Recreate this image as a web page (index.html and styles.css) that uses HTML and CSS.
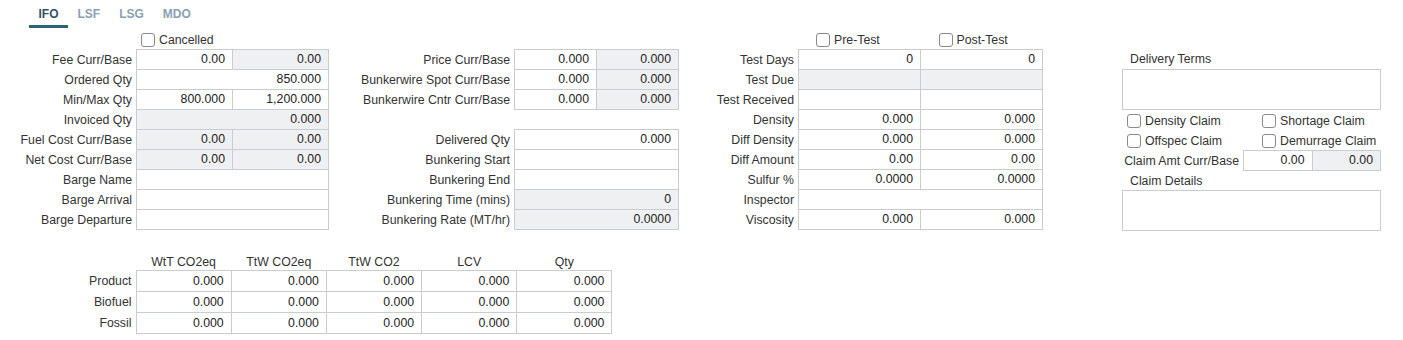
FILE: index.html
```html
<!DOCTYPE html>
<html>
<head>
  <title>Fuel Details</title>
  <link rel="stylesheet" href="styles.css">
</head>
<body>
  <nav class="tabs">
    <a class="tab active" href="#">IFO</a>
    <a class="tab" href="#">LSF</a>
    <a class="tab" href="#">LSG</a>
    <a class="tab" href="#">MDO</a>
  </nav>
  <form class="fuel-form">
    <div class="col col-qty">
      <div class="check-row pad-5"><label class="check"><input type="checkbox">Cancelled</label></div>
      <label class="lbl">Fee Curr/Base</label>
      <div class="pair"><input class="field" value="0.00"><input class="field ro" value="0.00" readonly></div>
      <label class="lbl">Ordered Qty</label>
      <input class="field" value="850.000">
      <label class="lbl">Min/Max Qty</label>
      <div class="pair"><input class="field" value="800.000"><input class="field" value="1,200.000"></div>
      <label class="lbl">Invoiced Qty</label>
      <input class="field ro" value="0.000" readonly>
      <label class="lbl">Fuel Cost Curr/Base</label>
      <div class="pair"><input class="field ro" value="0.00" readonly><input class="field ro" value="0.00" readonly></div>
      <label class="lbl">Net Cost Curr/Base</label>
      <div class="pair"><input class="field ro" value="0.00" readonly><input class="field ro" value="0.00" readonly></div>
      <label class="lbl">Barge Name</label>
      <input class="field">
      <label class="lbl">Barge Arrival</label>
      <input class="field">
      <label class="lbl">Barge Departure</label>
      <input class="field">
    </div>

    <div class="col col-price">
      <div class="check-row"></div>
      <label class="lbl">Price Curr/Base</label>
      <div class="pair"><input class="field" value="0.000"><input class="field ro" value="0.000" readonly></div>
      <label class="lbl">Bunkerwire Spot Curr/Base</label>
      <div class="pair"><input class="field" value="0.000"><input class="field ro" value="0.000" readonly></div>
      <label class="lbl">Bunkerwire Cntr Curr/Base</label>
      <div class="pair"><input class="field" value="0.000"><input class="field ro" value="0.000" readonly></div>
      <div class="spacer"></div>
      <label class="lbl">Delivered Qty</label>
      <input class="field" value="0.000">
      <label class="lbl">Bunkering Start</label>
      <input class="field">
      <label class="lbl">Bunkering End</label>
      <input class="field">
      <label class="lbl">Bunkering Time (mins)</label>
      <input class="field ro" value="0" readonly>
      <label class="lbl">Bunkering Rate (MT/hr)</label>
      <input class="field ro" value="0.0000" readonly>
    </div>

    <div class="col col-test">
      <div class="check-row split">
        <label class="check"><input type="checkbox">Pre-Test</label>
        <label class="check"><input type="checkbox">Post-Test</label>
      </div>
      <label class="lbl">Test Days</label>
      <div class="pair"><input class="field" value="0"><input class="field" value="0"></div>
      <label class="lbl">Test Due</label>
      <div class="pair"><input class="field ro" readonly><input class="field ro" readonly></div>
      <label class="lbl">Test Received</label>
      <div class="pair"><input class="field"><input class="field"></div>
      <label class="lbl">Density</label>
      <div class="pair"><input class="field" value="0.000"><input class="field" value="0.000"></div>
      <label class="lbl">Diff Density</label>
      <div class="pair"><input class="field" value="0.000"><input class="field" value="0.000"></div>
      <label class="lbl">Diff Amount</label>
      <div class="pair"><input class="field" value="0.00"><input class="field" value="0.00"></div>
      <label class="lbl">Sulfur %</label>
      <div class="pair"><input class="field" value="0.0000"><input class="field" value="0.0000"></div>
      <label class="lbl">Inspector</label>
      <input class="field">
      <label class="lbl">Viscosity</label>
      <div class="pair"><input class="field" value="0.000"><input class="field" value="0.000"></div>
    </div>

    <div class="col col-claim">
      <label class="area-lbl">Delivery Terms</label>
      <textarea class="area"></textarea>
      <div class="claim-checks">
        <label class="check"><input type="checkbox">Density Claim</label>
        <label class="check"><input type="checkbox">Shortage Claim</label>
        <label class="check"><input type="checkbox">Offspec Claim</label>
        <label class="check"><input type="checkbox">Demurrage Claim</label>
      </div>
      <div class="claim-amt">
        <label class="lbl">Claim Amt Curr/Base</label>
        <div class="pair"><input class="field" value="0.00"><input class="field ro" value="0.00" readonly></div>
      </div>
      <label class="area-lbl details">Claim Details</label>
      <textarea class="area"></textarea>
    </div>
  </form>

  <table class="emissions">
    <colgroup>
      <col class="lbl-col">
      <col class="num-col"><col class="num-col"><col class="num-col"><col class="num-col"><col class="num-col">
    </colgroup>
    <thead>
      <tr><th></th><th>WtT CO2eq</th><th>TtW CO2eq</th><th>TtW CO2</th><th>LCV</th><th>Qty</th></tr>
    </thead>
    <tbody>
      <tr><th class="row-lbl">Product</th><td>0.000</td><td>0.000</td><td>0.000</td><td>0.000</td><td>0.000</td></tr>
      <tr><th class="row-lbl">Biofuel</th><td>0.000</td><td>0.000</td><td>0.000</td><td>0.000</td><td>0.000</td></tr>
      <tr><th class="row-lbl">Fossil</th><td>0.000</td><td>0.000</td><td>0.000</td><td>0.000</td><td>0.000</td></tr>
    </tbody>
  </table>
</body>
</html>
```

FILE: styles.css
```css
body {
  margin: 0;
  padding: 0 8px;
  font-family: "Liberation Sans", Arial, sans-serif;
  font-size: 12.3px;
  color: #333;
  background-color: #fff;
}
.tabs {
  display: flex;
  padding-left: 21px;
}
.tab {
  padding: 7px 9.5px 4px;
  line-height: 14px;
  font-size: 12px;
  font-weight: bold;
  color: #8ba0b3;
  text-decoration: none;
  border-bottom: 3px solid transparent;
}
.tab.active {
  color: #34525f;
  border-bottom-color: #2e5f74;
}
.fuel-form {
  display: flex;
  align-items: flex-start;
  margin-top: 5px;
}
.col {
  display: grid;
  grid-template-rows: 16px;
  grid-auto-rows: 20px;
  column-gap: 4px;
}
.col-qty {
  grid-template-columns: 124px 193px;
}
.col-price {
  grid-template-columns: 181px 165px;
}
.col-test {
  grid-template-columns: 115px 245px;
}
.check-row {
  grid-column: 2;
  display: flex;
  align-items: flex-start;
}
.pad-5 {
  padding-left: 5px;
}
.check-row.split .check {
  flex: 1;
  padding-left: 18px;
}
.spacer {
  grid-column: 1 / 3;
}
.check {
  display: flex;
  align-items: center;
  gap: 4px;
  line-height: 14px;
  color: #333;
}
.check input {
  appearance: none;
  margin: 0;
  width: 14px;
  height: 14px;
  border: 1px solid #8a8a8a;
  border-radius: 3px;
  background-color: #fff;
}
.lbl {
  text-align: right;
  line-height: 14px;
  padding-top: 4px;
  white-space: nowrap;
}
.field {
  display: block;
  width: 100%;
  height: 21px;
  box-sizing: border-box;
  margin: 0;
  padding: 0 7px 2px;
  border: 1px solid #c9cdd3;
  background-color: #fff;
  font: inherit;
  color: #222;
  text-align: right;
  outline: none;
}
.field.ro {
  background-color: #eff0f2;
}
.pair {
  display: flex;
  height: 20px;
}
.pair .field {
  flex: 1 1 0;
  min-width: 0;
}
.pair .field + .field {
  margin-left: -1px;
}
.col-claim {
  display: flex;
  flex-direction: column;
  width: 259px;
  margin-left: 79px;
}
.area-lbl {
  padding: 19px 0 0 8px;
  line-height: 14px;
  margin-bottom: 3px;
}
.area-lbl.details {
  padding-top: 3px;
  margin-bottom: 2px;
}
.area {
  display: block;
  width: 259px;
  height: 41px;
  box-sizing: border-box;
  margin: 0;
  border: 1px solid #c9cdd3;
  resize: none;
  font: inherit;
}
.claim-checks {
  display: grid;
  grid-template-columns: 135px 119px;
  grid-auto-rows: 20px;
  align-items: center;
  padding: 1px 0 0 5px;
}
.claim-amt {
  display: grid;
  grid-template-columns: 117px 138px;
  column-gap: 4px;
  height: 21px;
  margin-top: -1px;
}
.claim-amt .lbl {
  padding-top: 4px;
}
.emissions {
  margin-top: 18px;
  border-collapse: collapse;
  table-layout: fixed;
  width: 604px;
}
.lbl-col {
  width: 128px;
}
.num-col {
  width: 95.2px;
}
.emissions thead th {
  height: 20px;
  padding: 0 0 1px;
  font-weight: normal;
  line-height: 14px;
  vertical-align: bottom;
  text-align: center;
}
.emissions .row-lbl {
  font-weight: normal;
  text-align: right;
  padding: 0 4px 0 0;
}
.emissions td {
  height: 20px;
  padding: 0 7px;
  border: 1px solid #c9cdd3;
  text-align: right;
  line-height: 14px;
  color: #222;
}
```
